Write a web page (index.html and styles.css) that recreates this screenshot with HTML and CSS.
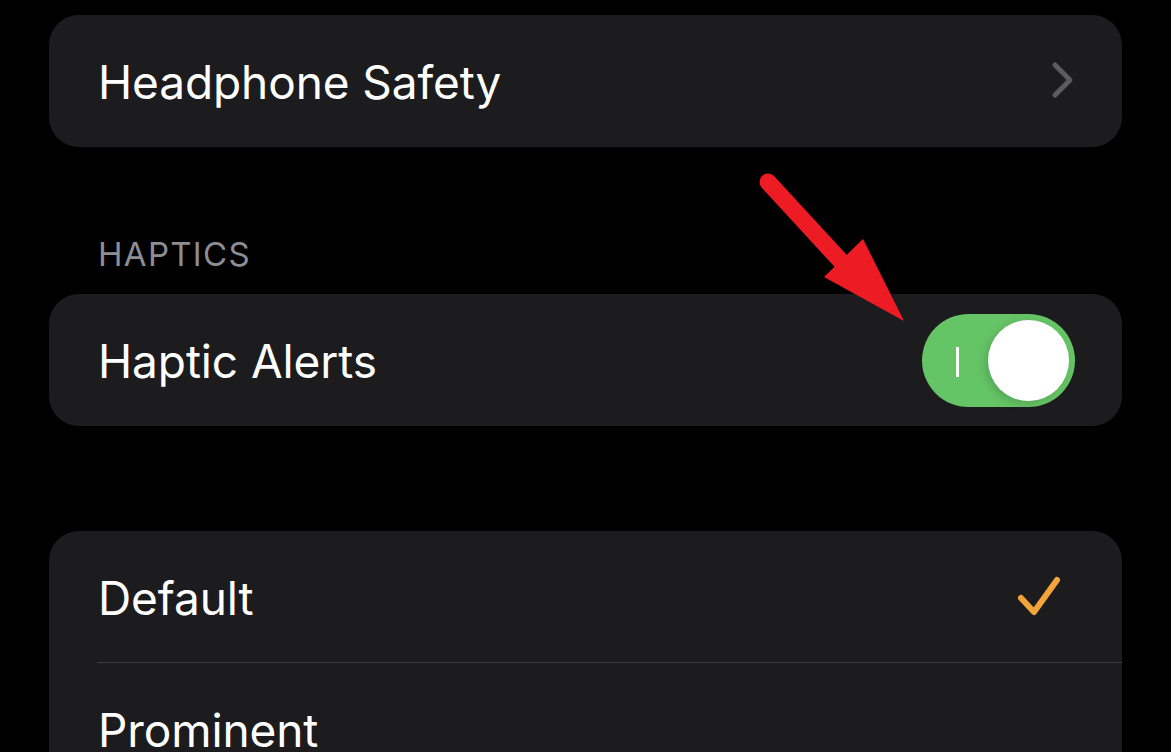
FILE: index.html
```html
<!DOCTYPE html>
<html>
<head>
<meta charset="utf-8">
<link rel="stylesheet" href="styles.css">
</head>
<body>
<div class="screen">
  <div class="card">
    <div class="row">
      <span class="label">Headphone Safety</span>
      <svg class="chevron" width="24" height="40" viewBox="0 0 24 40"><path d="M4 4 L19 19 L4 34" fill="none" stroke="#5b5b60" stroke-width="5" stroke-linecap="round" stroke-linejoin="round"/></svg>
    </div>
  </div>

  <div class="section-header">HAPTICS</div>

  <div class="card">
    <div class="row">
      <span class="label">Haptic Alerts</span>
      <div class="toggle on">
        <span class="toggle-i"></span>
        <span class="knob"></span>
      </div>
    </div>
  </div>

  <div class="card card-list">
    <div class="row">
      <span class="label">Default</span>
      <svg class="check" width="44" height="42" viewBox="0 0 44 42"><path d="M4 22 L17 36 L40 4" fill="none" stroke="#f2a33a" stroke-width="6" stroke-linecap="round" stroke-linejoin="round"/></svg>
    </div>
    <div class="sep"></div>
    <div class="row">
      <span class="label">Prominent</span>
    </div>
  </div>

  <svg class="arrow" width="160" height="170" viewBox="0 0 160 170">
    <path d="M18 22 L100 111" stroke="#ed1c24" stroke-width="17" stroke-linecap="round" fill="none"/>
    <polygon points="113,79 74,117 154,161" fill="#ed1c24"/>
  </svg>
</div>
</body>
</html>
```

FILE: styles.css
```css
html, body {
  margin: 0;
  padding: 0;
  background: #000;
}
body {
  width: 1171px;
  height: 752px;
  overflow: hidden;
  font-family: "Inter", "Liberation Sans", sans-serif;
  color: #fff;
}
.screen {
  position: relative;
  padding: 15px 49px 0 49px;
}
.card {
  background: #1c1c1e;
  border-radius: 30px;
  overflow: hidden;
}
.row {
  height: 132px;
  display: flex;
  align-items: center;
  justify-content: space-between;
  padding: 0 47px 0 49px;
}
.label {
  font-size: 46px;
  letter-spacing: -0.1px;
  padding-top: 2px;
}
.chevron {
  margin-right: 0;
}
.section-header {
  height: 147px;
  box-sizing: border-box;
  padding: 87px 0 0 49px;
  font-size: 33px;
  letter-spacing: 1.3px;
  color: #8d8d93;
  line-height: 40px;
}
.toggle {
  position: relative;
  width: 153px;
  height: 93px;
  border-radius: 47px;
  background: #65c466;
}
.toggle-i {
  position: absolute;
  left: 34px;
  top: 33px;
  width: 3px;
  height: 30px;
  background: #fff;
}
.knob {
  position: absolute;
  right: 6px;
  top: 6px;
  width: 81px;
  height: 81px;
  border-radius: 50%;
  background: #fff;
  box-shadow: -3px 3px 8px rgba(0,0,0,0.15);
}
.card-list {
  margin-top: 105px;
  border-bottom-left-radius: 0;
  border-bottom-right-radius: 0;
}
.card-list .row {
  height: 131px;
}
.check {
  margin-right: 14px;
}
.sep {
  height: 1px;
  background: #3a3a3d;
  margin-left: 48px;
}
.arrow {
  position: absolute;
  left: 750px;
  top: 160px;
}
```
